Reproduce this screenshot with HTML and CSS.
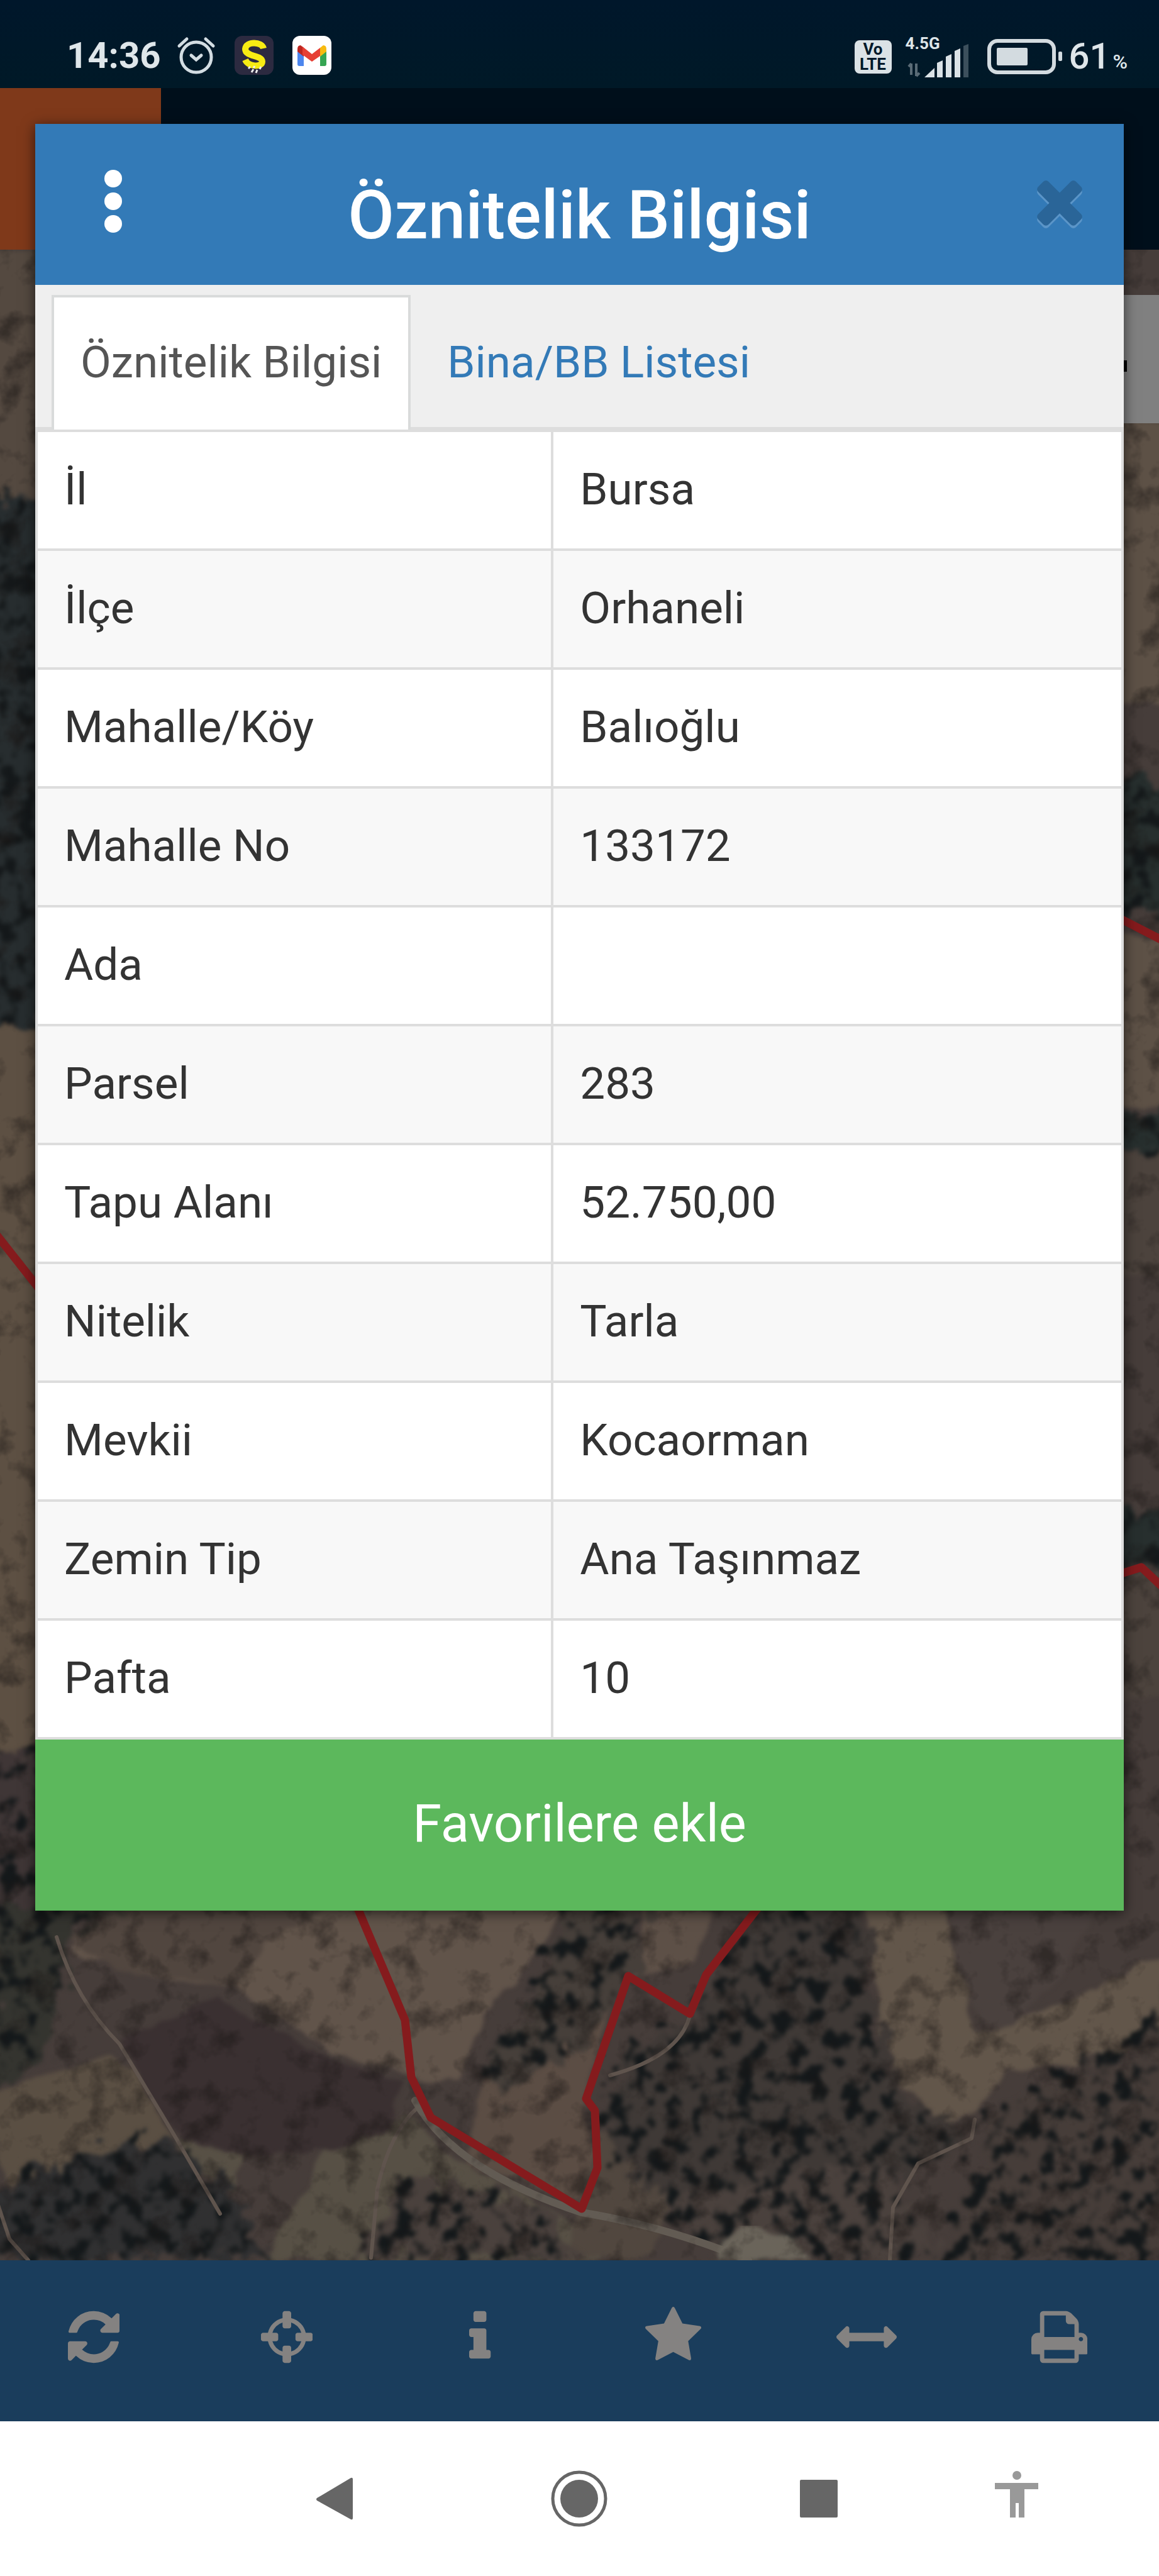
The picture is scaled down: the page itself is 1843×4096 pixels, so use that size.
FILE: index.html
```html
<!DOCTYPE html>
<html lang="tr">
<head>
<meta charset="utf-8">
<meta name="viewport" content="width=device-width, initial-scale=1">
<title>Öznitelik Bilgisi</title>
<link rel="stylesheet" href="styles.css">
</head>
<body>
<div class="screen">
  <header class="status">
    <div class="status-group">
      <span class="clock">14:36</span>
      <svg class="ic-alarm" viewBox="0 0 62 60" aria-label="Alarm"><g fill="none" stroke="#d3dde3" stroke-width="5" stroke-linecap="round"><circle cx="31" cy="33" r="24"/><path d="M23 30l8 7 8-7M4 15L16 4M58 15L46 4"/></g></svg>
      <svg class="ic-app" viewBox="0 0 62 62" aria-label="Uygulama"><rect width="62" height="62" rx="12" fill="#2c2a40"/><path d="M46 20C44 9 18 8 17 21c0 13 27 9 27 20 0 9-22 9-27-3" fill="none" stroke="#f7ec13" stroke-width="10"/><path d="M22 52l3-3m2 9l3-5m4 6l2-5m-6-3l2-3m8 5l2-4" stroke="#eee" stroke-width="3"/></svg>
      <svg class="ic-mail" viewBox="0 0 62 62" aria-label="Gmail"><rect width="62" height="62" rx="12" fill="#fff"/><path d="M8 22v23q0 3 3 3h7V28z" fill="#4c86ee"/><path d="M54 22v23q0 3-3 3h-7V28z" fill="#35a552"/><path d="M44 19l5-4q5 0 5 6v4l-10 8z" fill="#f8bb10"/><path d="M8 25v-4q0-6 5-6l5 4v14z" fill="#bd2620"/><path d="M16 17l15 12 13-10v13L31 41 16 30z" fill="#e63f34"/></svg>
    </div>
    <div class="status-group right">
      <span class="volte"><span>Vo</span><span>LTE</span></span>
      <div class="signal">
        <span>4.5G</span>
        <svg viewBox="0 0 104 54" aria-label="Sinyal"><path d="M9 31v18M5 36l4-5M17 31v20M17 51l5-5" stroke="#5a6b76" stroke-width="4" fill="none"/><path d="M30 53l16-15v15z M50 53V30l9-4v27z M64 53V20l9-4v37z M78 53V11l9-4v46z" fill="#dbe2e6"/><path d="M92 53V3l8-3v53z" fill="#3c4f5c"/></svg>
      </div>
      <svg class="ic-battery" viewBox="0 0 120 56" aria-label="Pil"><rect x="3" y="3" width="103" height="50" rx="13" fill="none" stroke="#d3dbe0" stroke-width="6"/><rect x="15" y="14" width="49" height="28" rx="2" fill="#d3dbe0"/><rect x="113" y="20" width="6" height="15" rx="2" fill="#d3dbe0"/></svg>
      <span class="percent">61<small>%</small></span>
    </div>
  </header>
  <div class="appbar"><div class="brand"></div></div>
  <main class="map">
    <svg class="imagery" viewBox="0 397 1843 3197" preserveAspectRatio="xMidYMax slice" aria-hidden="true">
      <defs>
        <filter id="rough" x="-5%" y="-5%" width="110%" height="110%" color-interpolation-filters="sRGB">
          <feTurbulence type="fractalNoise" baseFrequency="0.02" numOctaves="3" seed="4" result="n"/>
          <feDisplacementMap in="SourceGraphic" in2="n" scale="26" xChannelSelector="R" yChannelSelector="G" result="d"/>
          <feGaussianBlur in="d" stdDeviation="3"/>
        </filter>
        <filter id="trees" x="-5%" y="-5%" width="110%" height="110%" color-interpolation-filters="sRGB">
          <feTurbulence type="fractalNoise" baseFrequency="0.035" numOctaves="4" seed="9" result="n"/>
          <feDisplacementMap in="SourceGraphic" in2="n" scale="80" xChannelSelector="R" yChannelSelector="G" result="d"/>
          <feColorMatrix in="n" type="matrix" values="0 0 0 0 .08 0 0 0 0 .095 0 0 0 0 .1 7 0 0 0 -3.5" result="s"/>
          <feComposite in="s" in2="d" operator="in" result="t"/>
          <feMerge result="m"><feMergeNode in="d"/><feMergeNode in="t"/></feMerge>
          <feGaussianBlur in="m" stdDeviation="3"/>
        </filter>
        <filter id="grain" x="0" y="0" width="100%" height="100%" color-interpolation-filters="sRGB">
          <feTurbulence type="fractalNoise" baseFrequency="0.022" numOctaves="4" seed="2"/>
          <feColorMatrix type="matrix" values="0 0 0 0 .1 0 0 0 0 .085 0 0 0 0 .08 3 0 0 0 -1.5"/>
        </filter>
      </defs>
      <rect y="397" width="1843" height="3197" fill="#463d3a"/>
      <g filter="url(#rough)">
        <path d="M-20 397H90V800H-20z" fill="#544940"/>
        <path d="M-20 1630H90V2790H-20z" fill="#5d5043"/>
        <path d="M1760 673h110v450h-110z M1760 1490h110v270h-110z" fill="#5d5146"/>
        <path d="M1760 1830h110v200h-110z M1760 2500h110v200h-110z" fill="#4c433d"/>
        <path d="M110 3090L200 3030H900L860 3100 770 3200 730 3310 640 3300 530 3265 440 3200 370 3160 280 3150 130 3110z" fill="#61544a"/>
        <path d="M110 3080L200 3030H520L430 3090 370 3160 180 3130z" fill="#51463f"/>
        <path d="M1030 3030h110l-40 90-90 20z" fill="#5d5047"/>
        <path d="M1375 3030H1500L1530 3130 1550 3235 1690 3185 1850 3110V3230L1770 3280 1600 3290 1560 3350 1500 3375 1430 3310 1400 3230z" fill="#62564a"/>
        <path d="M1510 3030h230l-50 110-80 80-50-5-40-80z" fill="#4a413e"/>
        <path d="M180 3262L215 3300 275 3395 140 3450 10 3480-20 3330 60 3300z" fill="#5a4f43"/>
        <path d="M830 3240L770 3300 740 3440 920 3500 950 3450 930 3330 980 3160z" fill="#5b4d44"/>
        <path d="M280 3400l110 25-15 65-80-55z M520 3410L640 3360 720 3430 900 3530 960 3594H420z" fill="#575045"/>
        <path d="M950 3390l130 10 10 80-60 110h-130z" fill="#51473f"/>
      </g>
      <g filter="url(#trees)">
        <path d="M-20 790H90V1630H-20z" fill="#272d2f"/>
        <path d="M-20 2790H90V3040H-20z" fill="#3f3636"/>
        <path d="M1760 1240h110v210h-110z M1760 1770h110v60h-110z M1760 2400h110v90h-110z" fill="#272f2e"/>
        <path d="M-20 3030H190L100 3080 110 3140 60 3280-20 3330z" fill="#34342f"/>
        <path d="M900 3030h130l-20 100-90 130-130 80-20-60 80-100z" fill="#463f3a"/>
        <path d="M1130 3150L1210 3030H1370L1400 3240 1440 3340 1540 3390 1500 3440 1230 3500 1010 3480 960 3380 990 3260 1100 3210z" fill="#3f3936"/>
        <path d="M1850 3180L1790 3260 1700 3300 1580 3350 1500 3594H1850z" fill="#463d39"/>
        <path d="M140 3420L270 3400 370 3490 440 3594H-20V3490z" fill="#303031"/>
        <path d="M640 3460l230 40 40 94H560z M1040 3490l370-50 80 154h-330z" fill="#4a413d"/>
      </g>
      <path filter="url(#rough)" d="M340 3180L440 3230 530 3275 640 3310 610 3390 520 3420 420 3430 290 3400 220 3310 190 3240z" fill="#3a3031"/>
      <g fill="none" stroke-linecap="round" stroke-linejoin="round">
        <path d="M90 3080Q120 3180 190 3250L280 3400 350 3520M665 3350Q620 3390 600 3480L590 3590M1097 3205Q1080 3270 970 3300M1550 3370L1545 3400 1460 3440 1420 3510 1415 3594M-5 3500L15 3560 45 3594" stroke="#5f544d" stroke-width="6"/>
        <path d="M660 3340Q720 3450 925 3518 1060 3540 1190 3594" stroke="#625b53" stroke-width="12"/>
        <path filter="url(#rough)" d="M1150 3560l40-18 60 12 40 40h-150z" fill="#6a645a"/>
      </g>
      <rect y="397" width="1843" height="3197" filter="url(#grain)" opacity=".5"/>
      <g fill="none" stroke="#851b1d" stroke-width="13" stroke-linejoin="round">
        <path d="M567 3030L644 3212 654 3303 685 3367 925 3512 950 3447 946 3356 932 3337 999 3142 1097 3202 1123 3140 1208 3030"/>
        <path d="M-5 1964L70 2059M1780 1460L1850 1496M1780 2503L1815 2492 1850 2525"/>
      </g>
    </svg>
    <div class="mapbox"><span></span></div>
  </main>
  <nav class="toolbar" aria-label="Harita araçları">
    <button type="button" aria-label="Yenile"><svg viewBox="0 -128 1536 1792"><path d="M1511 928q0 5-1 7-64 268-268 434.5t-478 166.5q-146 0-282.5-55t-243.5-157l-129 129q-19 19-45 19t-45-19-19-45v-448q0-26 19-45t45-19h448q26 0 45 19t19 45-19 45l-137 137q71 66 161 102t187 36q134 0 250-65t186-179q11-17 53-117 8-23 30-23h192q13 0 22.5 9.5t9.5 22.5zm25-800v448q0 26-19 45t-45 19h-448q-26 0-45-19t-19-45 19-45l138-138q-148-137-349-137-134 0-250 65t-186 179q-11 17-53 117-8 23-30 23h-199q-13 0-22.5-9.5t-9.5-22.5v-7q65-268 270-434.5t480-166.5q146 0 284 55.5t245 156.5l130-129q19-19 45-19t45 19 19 45z"/></svg></button>
    <button type="button" aria-label="Konum"><svg viewBox="0 -128 1536 1792"><path d="M1197 896h-109q-26 0-45-19t-19-45v-128q0-26 19-45t45-19h109q-32-108-112.5-188.5t-188.5-112.5v109q0 26-19 45t-45 19h-128q-26 0-45-19t-19-45v-109q-108 32-188.5 112.5t-112.5 188.5h109q26 0 45 19t19 45v128q0 26-19 45t-45 19h-109q32 108 112.5 188.5t188.5 112.5v-109q0-26 19-45t45-19h128q26 0 45 19t19 45v109q108-32 188.5-112.5t112.5-188.5zm339-192v128q0 26-19 45t-45 19h-143q-37 161-154.5 278.5t-278.5 154.5v143q0 26-19 45t-45 19h-128q-26 0-45-19t-19-45v-143q-161-37-278.5-154.5t-154.5-278.5h-143q-26 0-45-19t-19-45v-128q0-26 19-45t45-19h143q37-161 154.5-278.5t278.5-154.5v-143q0-26 19-45t45-19h128q26 0 45 19t19 45v143q161 37 278.5 154.5t154.5 278.5h143q26 0 45 19t19 45z"/></svg></button>
    <button type="button" aria-label="Bilgi"><svg viewBox="0 0 640 1792"><path d="M640 1344v128q0 26-19 45t-45 19h-512q-26 0-45-19t-19-45v-128q0-26 19-45t45-19h64v-384h-64q-26 0-45-19t-19-45v-128q0-26 19-45t45-19h384q26 0 45 19t19 45v576h64q26 0 45 19t19 45zm-128-1152v192q0 26-19 45t-45 19h-256q-26 0-45-19t-19-45v-192q0-26 19-45t45-19h256q26 0 45 19t19 45z"/></svg></button>
    <button type="button" aria-label="Favoriler"><svg viewBox="0 0 1664 1792"><path d="M1664 615q0 22-26 48l-363 354 86 500q1 7 1 20 0 21-10.5 35.5t-30.5 14.5q-19 0-40-12l-449-236-449 236q-22 12-40 12-21 0-31.5-14.5t-10.5-35.5q0-6 2-20l86-500-364-354q-25-27-25-48 0-37 56-46l502-73 225-455q19-41 49-41t49 41l225 455 502 73q56 9 56 46z"/></svg></button>
    <button type="button" aria-label="Ölçüm"><svg viewBox="0 0 1792 1792"><path d="M1792 896q0 26-19 45l-256 256q-19 19-45 19t-45-19-19-45v-128h-1024v128q0 26-19 45t-45 19-45-19l-256-256q-19-19-19-45t19-45l256-256q19-19 45-19t45 19 19 45v128h1024v-128q0-26 19-45t45-19 45 19l256 256q19 19 19 45z"/></svg></button>
    <button type="button" aria-label="Yazdır"><svg viewBox="0 0 1664 1792"><path d="M384 1536h896v-256h-896v256zm0-640h896v-384h-160q-40 0-68-28t-28-68v-160h-640v640zm1152 64q0-26-19-45t-45-19-45 19-19 45 19 45 45 19 45-19 19-45zm128 0v416q0 13-9.5 22.5t-22.5 9.5h-224v160q0 40-28 68t-68 28h-960q-40 0-68-28t-28-68v-160h-224q-13 0-22.5-9.5t-9.5-22.5v-416q0-79 56.5-135.5t135.5-56.5h64v-544q0-40 28-68t68-28h672q40 0 88 20t76 48l152 152q28 28 48 76t20 88v256h64q79 0 135.5 56.5t56.5 135.5z"/></svg></button>
  </nav>
  <nav class="sysnav" aria-label="Sistem">
    <button type="button" class="back" aria-label="Geri"><svg viewBox="0 0 90 90"><path d="M17 44Q15 46 17 48L71 78Q74 79 74 76V14Q74 11 71 12z"/></svg></button>
    <button type="button" aria-label="Ana ekran"><svg viewBox="0 0 90 90"><circle cx="45" cy="45" r="42" fill="none" stroke="#666" stroke-width="5"/><circle cx="45" cy="45" r="30"/></svg></button>
    <button type="button" aria-label="Son uygulamalar"><svg viewBox="0 0 90 90"><rect x="15" y="15" width="60" height="60" rx="2"/></svg></button>
    <button type="button" class="access" aria-label="Erişilebilirlik"><svg viewBox="0 0 90 90"><circle cx="46" cy="8" r="7"/><path d="M11 20h69v10H58v45H49V52h-5v23h-9V30H11z"/></svg></button>
  </nav>

  <section class="modal" role="dialog" aria-labelledby="title">
    <header class="modal-head">
      <button type="button" aria-label="Menü"><svg class="dots" viewBox="0 0 28 100"><circle cx="14" cy="14" r="14"/><circle cx="14" cy="50" r="14"/><circle cx="14" cy="86" r="14"/></svg></button>
      <h1 id="title">Öznitelik Bilgisi</h1>
      <button type="button" aria-label="Kapat"><svg class="close" viewBox="110 366 1188 1260"><path transform="translate(0 70)" fill="#5b95c8" d="M1298 1322q0 40-28 68l-136 136q-28 28-68 28t-68-28l-294-294-294 294q-28 28-68 28t-68-28l-136-136q-28-28-28-68t28-68l294-294-294-294q-28-28-28-68t28-68l136-136q28-28 68-28t68 28l294 294 294-294q28-28 68-28t68 28l136 136q28 28 28 68t-28 68l-294 294 294 294q28 28 28 68z"/><path fill="#2a6598" d="M1298 1322q0 40-28 68l-136 136q-28 28-68 28t-68-28l-294-294-294 294q-28 28-68 28t-68-28l-136-136q-28-28-28-68t28-68l294-294-294-294q-28-28-28-68t28-68l136-136q28-28 68-28t68 28l294 294 294-294q28-28 68-28t68 28l136 136q28 28 28 68t-28 68l-294 294 294 294q28 28 28 68z"/></svg></button>
    </header>
    <nav class="tabs">
      <a href="#bilgi" class="active">Öznitelik Bilgisi</a>
      <a href="#liste">Bina/BB Listesi</a>
    </nav>
    <table id="bilgi">
      <tbody>
        <tr><th scope="row">İl</th><td>Bursa</td></tr>
        <tr><th scope="row">İlçe</th><td>Orhaneli</td></tr>
        <tr><th scope="row">Mahalle/Köy</th><td>Balıoğlu</td></tr>
        <tr><th scope="row">Mahalle No</th><td>133172</td></tr>
        <tr><th scope="row">Ada</th><td></td></tr>
        <tr><th scope="row">Parsel</th><td>283</td></tr>
        <tr><th scope="row">Tapu Alanı</th><td>52.750,00</td></tr>
        <tr><th scope="row">Nitelik</th><td>Tarla</td></tr>
        <tr><th scope="row">Mevkii</th><td>Kocaorman</td></tr>
        <tr><th scope="row">Zemin Tip</th><td>Ana Taşınmaz</td></tr>
        <tr><th scope="row">Pafta</th><td>10</td></tr>
      </tbody>
    </table>
    <button type="button" class="favorite">Favorilere ekle</button>
  </section>
</div>
</body>
</html>
```
FILE: styles.css
```css
* { box-sizing: border-box; }
body {
  margin: 0;
  font-family: Roboto, "Liberation Sans", sans-serif;
  font-size: 71px;
  color: #333;
}
button {
  padding: 0;
  border: 0;
  background: none;
  font: inherit;
  color: inherit;
}
svg { display: block; }

.screen {
  position: relative;
  display: flex;
  flex-direction: column;
  min-height: 100vh;
}

/* phone status bar */
.status {
  display: flex;
  align-items: flex-start;
  justify-content: space-between;
  height: 140px;
  padding: 38px 50px 0 106px;
  background: linear-gradient(#00172b, #001927);
  color: #dfe6ea;
}
.status-group { display: flex; align-items: center; height: 100px; }
.status-group.right { height: 104px; }
.clock { font-size: 58px; font-weight: 700; line-height: 104px; }
.ic-alarm { width: 62px; height: 60px; margin-left: 26px; }
.ic-app { width: 62px; height: 62px; margin-left: 30px; }
.ic-mail { width: 62px; height: 62px; margin-left: 30px; }
.volte {
  display: flex;
  flex-direction: column;
  align-items: center;
  width: 59px;
  height: 53px;
  padding-top: 2px;
  border-radius: 8px;
  background: #dbe2e6;
  color: #00192a;
  font-size: 26px;
  font-weight: 700;
  line-height: 24px;
}
.signal {
  display: flex;
  flex-direction: column;
  width: 104px;
  margin-left: 22px;
  font-size: 26px;
  font-weight: 700;
  line-height: 26px;
}
.signal svg { width: 104px; height: 54px; margin-top: -12px; }
.ic-battery { width: 120px; height: 56px; margin-left: 26px; }
.percent { margin-left: 10px; font-size: 58px; font-weight: 500; line-height: 72px; padding-top: 6px; }
.percent small { margin-left: 4px; font-size: 32px; }

/* application behind the dialog */
.appbar { height: 257px; background: #000f1b; }
.brand { width: 256px; height: 100%; background: #7f391a; }
.map { position: relative; flex: 1; overflow: hidden; background: #463d3a; }
.imagery { position: absolute; inset: 0; width: 100%; height: 100%; }
.mapbox {
  position: absolute;
  top: 72px;
  right: 0;
  width: 56px;
  height: 204px;
  padding-top: 104px;
  background: #808080;
}
.mapbox span { display: block; width: 5px; height: 18px; background: #000; }
.toolbar {
  display: grid;
  grid-template-columns: repeat(6, 1fr);
  height: 256px;
  background: #1a3d5c;
  fill: #848281;
}
.toolbar button {
  display: flex;
  align-items: center;
  justify-content: center;
  padding: 0 9px 12px 0;
}
.toolbar svg { height: 96px; }
.sysnav {
  display: grid;
  grid-template-columns: 338fr 388fr 389fr 374fr 254fr 100fr;
  height: 246px;
  background: #fff;
  fill: #666;
}
.sysnav button { display: flex; align-items: center; justify-content: center; }
.sysnav svg { width: 90px; height: 90px; }
.sysnav .back { grid-column: 2; }
.sysnav .access { fill: #999; }

/* attribute dialog */
.modal {
  position: absolute;
  top: 197px;
  left: 56px;
  right: 56px;
  background: #fff;
  box-shadow: 0 4px 20px rgba(0, 0, 0, .6);
}
.modal-head {
  display: grid;
  grid-template-columns: 248px 1fr 248px;
  align-items: center;
  height: 256px;
  background: #337ab7;
  color: #fff;
  fill: #fff;
}
.modal-head button { display: flex; justify-content: center; }
.modal-head h1 {
  margin: 0;
  padding-top: 34px;
  font-size: 107px;
  font-weight: 500;
  text-align: center;
  white-space: nowrap;
}
.dots { width: 28px; height: 100px; }
.close { width: 72px; height: 76px; }
.modal-head button:first-child { padding-bottom: 10px; }
.modal-head button:last-child { padding-left: 44px; }
.tabs {
  display: flex;
  gap: 12px;
  padding: 16px 26px 0;
  border-bottom: 4px solid #ddd;
  background: #efefef;
}
.tabs a {
  height: 214px;
  margin-bottom: -4px;
  padding: 0 42px;
  border: 4px solid transparent;
  border-bottom: 0;
  line-height: 206px;
  color: #337ab7;
  text-decoration: none;
}
.tabs .active { border-color: #d9dbdb; background: #fff; color: #555; }
table {
  width: 100%;
  table-layout: fixed;
  border-collapse: collapse;
}
th, td {
  height: 189px;
  padding: 0 42px 4px;
  border: 4px solid #ddd;
  font-weight: 400;
  text-align: left;
}
th { width: 47.5%; }
tr:nth-child(even) { background: #f8f8f8; }
.favorite {
  display: block;
  width: 100%;
  height: 272px;
  padding-bottom: 6px;
  background: #5cb85c;
  color: #fff;
  font-size: 83px;
}
```
